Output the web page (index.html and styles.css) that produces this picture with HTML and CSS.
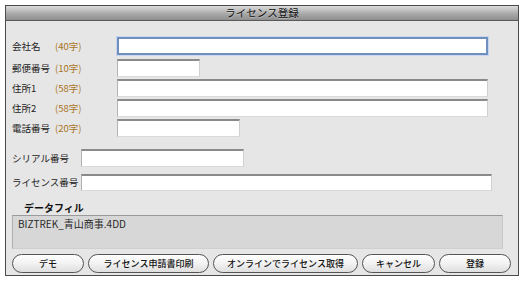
FILE: index.html
```html
<!DOCTYPE html>
<html lang="ja">
<head>
<meta charset="utf-8">
<title>ライセンス登録</title>
<link rel="stylesheet" href="styles.css">
</head>
<body>
<div class="window">
  <div class="titlebar">ライセンス登録</div>
  <div class="content">
    <div class="fields">
      <div class="row row-first">
        <span class="label">会社名</span><span class="count">(40字)</span>
        <div class="input input-focus input-long"></div>
      </div>
      <div class="row">
        <span class="label">郵便番号</span><span class="count">(10字)</span>
        <div class="input input-zip"></div>
      </div>
      <div class="row">
        <span class="label">住所1</span><span class="count">(58字)</span>
        <div class="input input-long"></div>
      </div>
      <div class="row">
        <span class="label">住所2</span><span class="count">(58字)</span>
        <div class="input input-long"></div>
      </div>
      <div class="row">
        <span class="label">電話番号</span><span class="count">(20字)</span>
        <div class="input input-tel"></div>
      </div>
    </div>
    <div class="serials">
      <div class="srow srow-first">
        <span class="slabel">シリアル番号</span>
        <div class="input input-serial"></div>
      </div>
      <div class="srow">
        <span class="slabel">ライセンス番号</span>
        <div class="input input-license"></div>
      </div>
    </div>
    <div class="datafile">
      <div class="datafile-label">データフィル</div>
      <div class="datafile-box">BIZTREK_青山商事.4DD</div>
    </div>
    <div class="buttons">
      <button class="btn btn-demo">デモ</button>
      <button class="btn btn-print">ライセンス申請書印刷</button>
      <button class="btn btn-online">オンラインでライセンス取得</button>
      <button class="btn btn-cancel">キャンセル</button>
      <button class="btn btn-ok">登録</button>
    </div>
  </div>
</div>
</body>
</html>
```

FILE: styles.css
```css
* { box-sizing: border-box; }
html, body { margin: 0; padding: 0; background: #ffffff; }
body {
  font-family: "Noto Sans CJK JP", "Noto Sans", sans-serif;
  font-size: 10px;
  color: #222;
}
.window {
  margin: 5px 0 0 5px;
  width: 514px;
  height: 271px;
  border: 1px solid #4a4a4a;
  background: #e6e6e6;
  display: flex;
  flex-direction: column;
}
.titlebar {
  height: 15px;
  flex: 0 0 15px;
  background: linear-gradient(#dcdcdc, #a9a9a9 55%, #8e8e8e);
  border-bottom: 1px solid #5a5a5a;
  text-align: center;
  font-size: 10.5px;
  line-height: 14px;
  color: #111;
  text-shadow: 0 1px 0 rgba(255,255,255,0.35);
}
.content {
  padding: 16px 0 0 6px;
  display: flex;
  flex-direction: column;
}
.fields { display: flex; flex-direction: column; gap: 2px; }
.row {
  display: grid;
  grid-template-columns: 43px 62px auto;
  align-items: center;
  height: 18px;
}
.row-first { margin-bottom: 2px; }
.label { font-size: 9.5px; color: #222; line-height: 12px; white-space: nowrap; }
.count { font-size: 9.5px; color: #a8741e; line-height: 12px; white-space: nowrap; }
.input {
  height: 18px;
  background: #fff;
  border-top: 2px solid #8a8a8a;
  border-left: 1px solid #b4b4b4;
  border-right: 1px solid #d0d0d0;
  border-bottom: 1px solid #dadada;
}
.input-focus {
  border: 2px solid #6f8fbf;
  box-shadow: 0 0 0 1px #c7d6ee;
}
.input-long { width: 371px; }
.input-zip { width: 83px; }
.input-tel { width: 123px; }
.serials {
  margin-top: 12px;
  display: flex;
  flex-direction: column;
  gap: 6px;
}
.srow {
  display: grid;
  grid-template-columns: 69px auto;
  align-items: center;
  height: 18px;
}
.slabel { font-size: 9.5px; line-height: 12px; white-space: nowrap; }
.input-serial { width: 163px; }
.input-license { width: 411px; height: 17px; }
.datafile { margin-top: 10px; }
.datafile-label {
  padding-left: 12px;
  font-size: 10px;
  font-weight: bold;
  line-height: 13px;
  color: #111;
}
.datafile-box {
  margin-top: 1px;
  width: 491px;
  height: 34px;
  background: #d7d7d7;
  border-top: 1px solid #9a9a9a;
  border-left: 1px solid #b0b0b0;
  border-right: 1px solid #c8c8c8;
  border-bottom: 1px solid #cfcfcf;
  padding: 1px 0 0 5px;
  font-size: 10px;
  line-height: 13px;
  color: #2a2a2a;
}
.buttons {
  margin-top: 5px;
  display: flex;
  gap: 4px;
}
.btn {
  height: 19px;
  padding: 0;
  margin: 0;
  border: 1px solid #555;
  border-radius: 10px;
  background: linear-gradient(#ffffff, #f2f2f2 50%, #dedede);
  font-family: "Noto Sans CJK JP", "Noto Sans", sans-serif;
  font-size: 9px;
  font-weight: 500;
  line-height: 16px;
  color: #111;
  text-align: center;
}
.btn-demo { width: 72px; }
.btn-print { width: 121px; }
.btn-online { width: 145px; }
.btn-cancel { width: 73px; }
.btn-ok { width: 72px; }
```
